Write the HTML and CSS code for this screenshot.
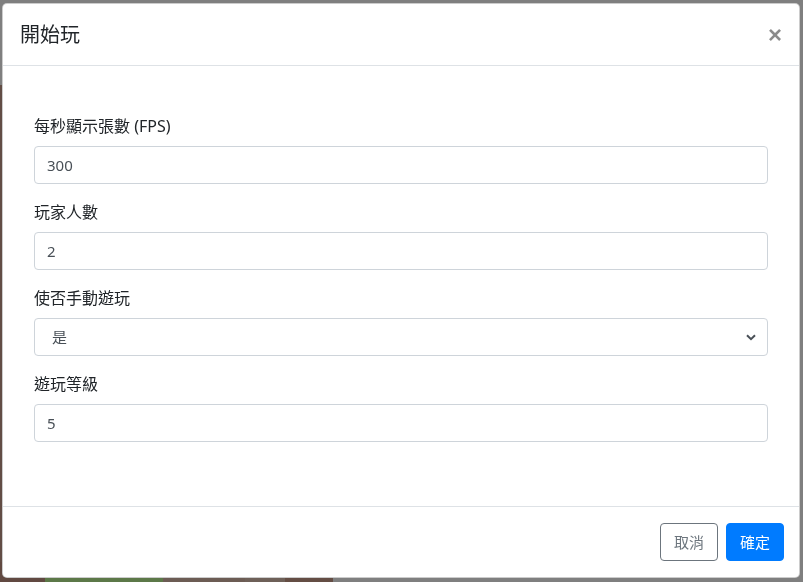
FILE: index.html
```html
<!DOCTYPE html>
<html lang="zh-Hant">
<head>
<meta charset="utf-8">
<title>開始玩</title>
<link rel="stylesheet" href="styles.css">
</head>
<body>
<div class="page">
  <div class="page-top"></div>
  <div class="page-main"></div>
  <div class="page-bar">
    <span class="blk blk-a"></span>
    <span class="blk blk-b">自動 加速</span>
    <span class="blk blk-c">英文字母鍵</span>
    <span class="blk blk-d">W</span>
    <span class="blk blk-e">按鈕</span>
    <span class="blk blk-f"></span>
  </div>
</div>
<div class="backdrop"></div>
<div class="modal">
  <div class="modal-header">
    <h5 class="modal-title">開始玩</h5>
    <button class="close" type="button" aria-label="Close">×</button>
  </div>
  <div class="modal-body">
    <form class="form">
      <div class="form-group">
        <label class="label">每秒顯示張數 (FPS)</label>
        <input class="form-control" type="text" value="300">
      </div>
      <div class="form-group">
        <label class="label">玩家人數</label>
        <input class="form-control" type="text" value="2">
      </div>
      <div class="form-group">
        <label class="label">使否手動遊玩</label>
        <div class="select-wrap">
          <select class="form-control select">
            <option>是</option>
            <option>否</option>
          </select>
          <svg class="chevron" width="10" height="7" viewBox="0 0 10 7"><path d="M1 1.2 L5 5.2 L9 1.2" fill="none" stroke="#495057" stroke-width="2"/></svg>
        </div>
      </div>
      <div class="form-group">
        <label class="label">遊玩等級</label>
        <input class="form-control" type="text" value="5">
      </div>
    </form>
  </div>
  <div class="modal-footer">
    <button class="btn btn-outline" type="button">取消</button>
    <button class="btn btn-primary" type="button">確定</button>
  </div>
</div>
</body>
</html>
```

FILE: styles.css
```css
* { box-sizing: border-box; }
html, body {
  margin: 0;
  padding: 0;
  width: 803px;
  height: 582px;
  overflow: hidden;
}
body {
  font-family: "Noto Sans", "Noto Sans CJK TC", sans-serif;
  font-size: 16px;
  line-height: 1.5;
  color: #212529;
  background: #fff;
}
.page {
  display: flex;
  flex-direction: column;
  height: 582px;
}
.page-top { height: 85px; background: #fff; }
.page-main { flex: 1; background: #fff; display: flex; }
.page-main::before { content: ""; width: 4px; background: #c49a8a; }
.page-bar {
  height: 20px;
  display: flex;
  font-size: 12px;
  line-height: 20px;
  overflow: hidden;
  background: #fff;
}
.blk { display: block; color: #fff; padding-left: 8px; white-space: nowrap; overflow: hidden; }
.blk-a { width: 45px; background: #c29383; }
.blk-b { width: 118px; background: #b8f090; padding-left: 70px; }
.blk-c { width: 82px; background: #d8b8a8; color: #000; padding-left: 12px; }
.blk-d { width: 40px; background: #dcc0b0; color: #334; }
.blk-e { width: 48px; background: #c89a88; }
.blk-f { flex: 1; background: #fff; }

.backdrop {
  position: fixed;
  inset: 0;
  background: rgba(0, 0, 0, 0.5);
}
.modal {
  position: absolute;
  left: 2px;
  top: 3px;
  width: 798px;
  background: #fff;
  border: 1px solid rgba(0, 0, 0, 0.2);
  border-radius: 5px;
  display: flex;
  flex-direction: column;
}
.modal-header {
  display: flex;
  align-items: flex-start;
  justify-content: space-between;
  padding: 16px 16px 15px;
  border-bottom: 1px solid #dee2e6;
}
.modal-title {
  margin: 0;
  font-size: 20px;
  font-weight: 400;
  line-height: 30px;
  padding-left: 1px;
}
.close {
  margin: -16px -16px -16px auto;
  padding: 16px 17px 16px 16px;
  background: transparent;
  border: 0;
  font-family: "Liberation Sans", "Noto Sans", sans-serif;
  font-size: 24px;
  font-weight: 700;
  line-height: 30px;
  color: #000;
  opacity: 0.45;
  cursor: pointer;
}
.modal-body {
  padding: 16px;
}
.form {
  padding: 32px 15px 32px 15px;
}
.form-group {
  margin-bottom: 16px;
  display: flex;
  flex-direction: column;
}
.label {
  display: block;
  margin-bottom: 8px;
  line-height: 24px;
  font-size: 16px;
}
.form-control {
  display: block;
  width: 100%;
  height: 38px;
  padding: 6px 12px;
  font-family: inherit;
  font-size: 15px;
  line-height: 24px;
  color: #495057;
  background: #fff;
  border: 1px solid #ced4da;
  border-radius: 4px;
  margin: 0;
}
.select-wrap {
  position: relative;
}
.select {
  appearance: none;
  -webkit-appearance: none;
  padding-left: 17px;
}
.chevron {
  position: absolute;
  right: 12px;
  top: 16px;
  pointer-events: none;
}
.modal-footer {
  display: flex;
  justify-content: flex-end;
  align-items: center;
  gap: 8px;
  padding: 16px 15px 16px 16px;
  border-top: 1px solid #dee2e6;
}
.btn {
  height: 38px;
  padding: 6px 12px;
  font-family: inherit;
  font-size: 15px;
  line-height: 24px;
  border-radius: 4px;
  border: 1px solid transparent;
  cursor: pointer;
  min-width: 58px;
}
.btn-outline {
  color: #6c757d;
  border-color: #6c757d;
  background: #fff;
}
.btn-primary {
  color: #fff;
  background: #007bff;
  border-color: #007bff;
}
```
